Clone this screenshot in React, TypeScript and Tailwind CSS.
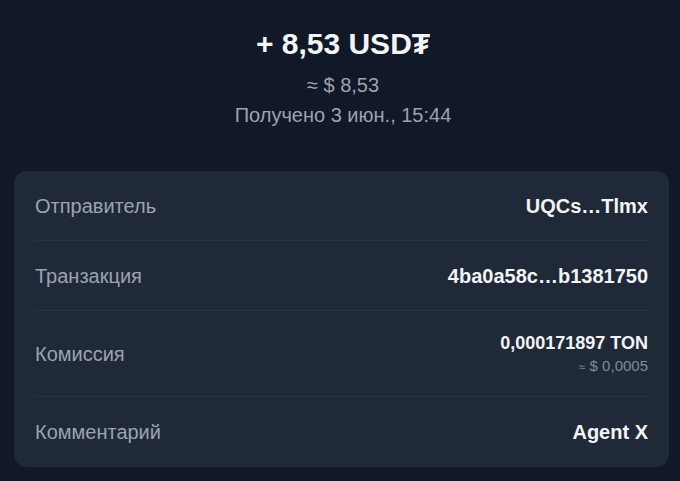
import React from "react";

interface Row {
  label: string;
  value: string;
  sub?: string;
}

const rows: Row[] = [
  { label: "Отправитель", value: "UQCs…Tlmx" },
  { label: "Транзакция", value: "4ba0a58c…b1381750" },
  { label: "Комиссия", value: "0,000171897 TON", sub: "$ 0,0005" },
  { label: "Комментарий", value: "Agent X" },
];

export default function App() {
  return (
    <div
      className="min-h-[481px] w-[680px] bg-[#111827] pl-[14px] pr-[11px] pt-[26px] pb-[14px]"
      style={{ fontFamily: '"Liberation Sans", Arial, sans-serif' }}
    >
      <div className="flex flex-col items-center pl-[3px]">
        <h1 className="text-[30px] font-bold leading-[36px] text-[#f3f4f6]">
          + 8,53 USD₮
        </h1>
        <p className="mt-[10px] text-[20px] leading-[26px] text-[#9ca3af]">≈ $ 8,53</p>
        <p className="mt-[4px] text-[20px] leading-[26px] text-[#9ca3af]">
          Получено 3 июн., 15:44
        </p>
      </div>

      <div className="mt-[43px] rounded-[12px] bg-[#1f2937] pl-[21px] pr-[21px]">
        {rows.map((row, i) => (
          <div
            key={row.label}
            className={`flex items-center justify-between ${
              row.sub ? "h-[86px]" : "h-[70px]"
            } ${i < rows.length - 1 ? "border-b border-[#283344]" : ""}`}
          >
            <span className="text-[20px] text-[#9ca3af]">{row.label}</span>
            {row.sub ? (
              <div className="flex flex-col items-end">
                <span className="text-[18px] font-bold leading-[22px] text-[#f3f4f6]">
                  {row.value}
                </span>
                <span className="mt-[3px] text-[15px] leading-[18px] text-[#838a96]">
                  <span className="text-[12px]">≈</span> {row.sub}
                </span>
              </div>
            ) : (
              <span className="text-[20px] font-bold text-[#f3f4f6]">{row.value}</span>
            )}
          </div>
        ))}
      </div>
    </div>
  );
}
